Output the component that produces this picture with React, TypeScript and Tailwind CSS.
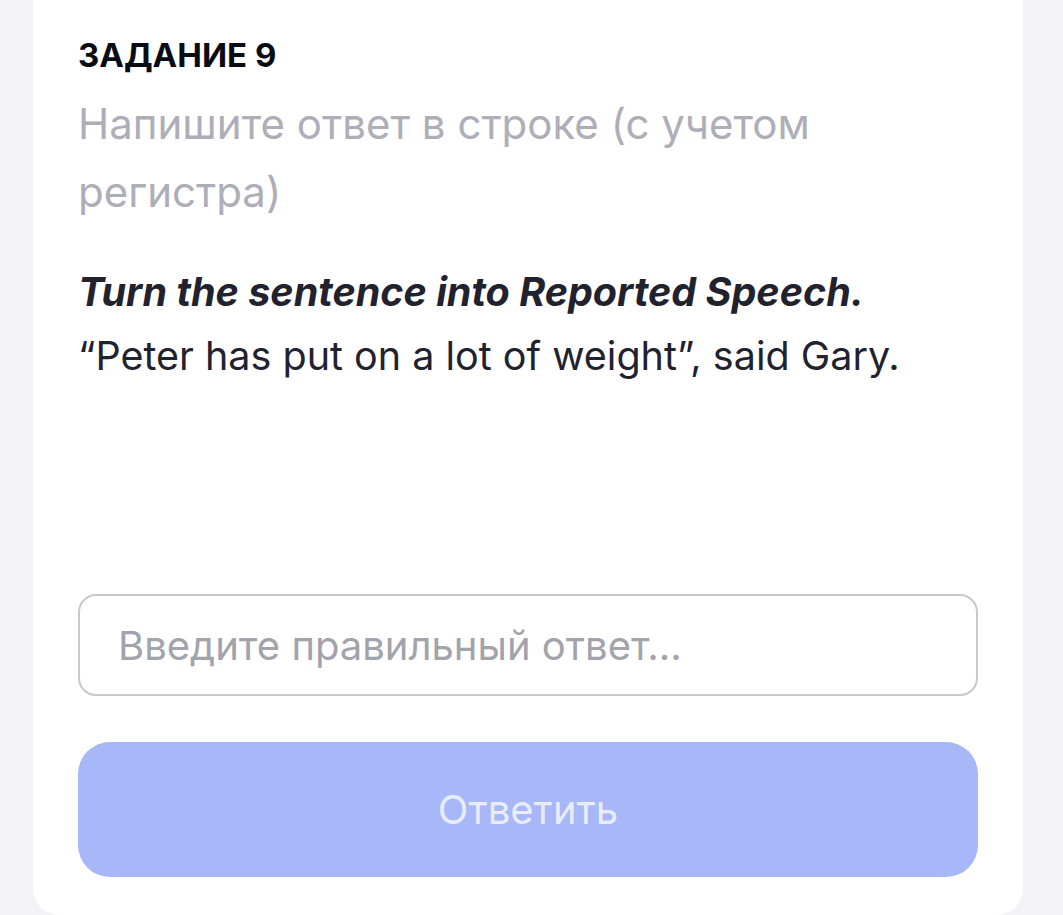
import React from "react";

export default function App() {
  return (
    <div className="min-h-[915px] bg-[#f2f2f7] font-['Inter',sans-serif]">
      <div className="ml-[33px] w-[990px] h-[915px] bg-white rounded-b-[26px] px-[45px] pt-[35px] flex flex-col">
        <div className="text-[33px] leading-[40px] font-bold text-[#0b0b14]">ЗАДАНИЕ 9</div>
        <div className="mt-[15px] text-[42px] leading-[68px] text-[#aeaeb8] pr-[100px]">
          Напишите ответ в строке (с учетом регистра)
        </div>
        <div className="mt-[34px] text-[39.5px] leading-[64px] text-[#22222e]">
          <div className="font-bold italic">Turn the sentence into Reported Speech.</div>
          <div>“Peter has put on a lot of weight”, said Gary.</div>
        </div>
        <input
          className="mt-auto h-[102px] w-full rounded-[18px] border-2 border-[#c8c8cc] px-[38px] text-[40px] text-[#22222e] placeholder:text-[#a3a3ab] outline-none"
          placeholder="Введите правильный ответ..."
        />
        <button className="mt-[46px] mb-[38px] h-[135px] w-full rounded-[32px] bg-[#a7b7f7] text-[40px] text-[#e8ecfc]">
          Ответить
        </button>
      </div>
    </div>
  );
}
